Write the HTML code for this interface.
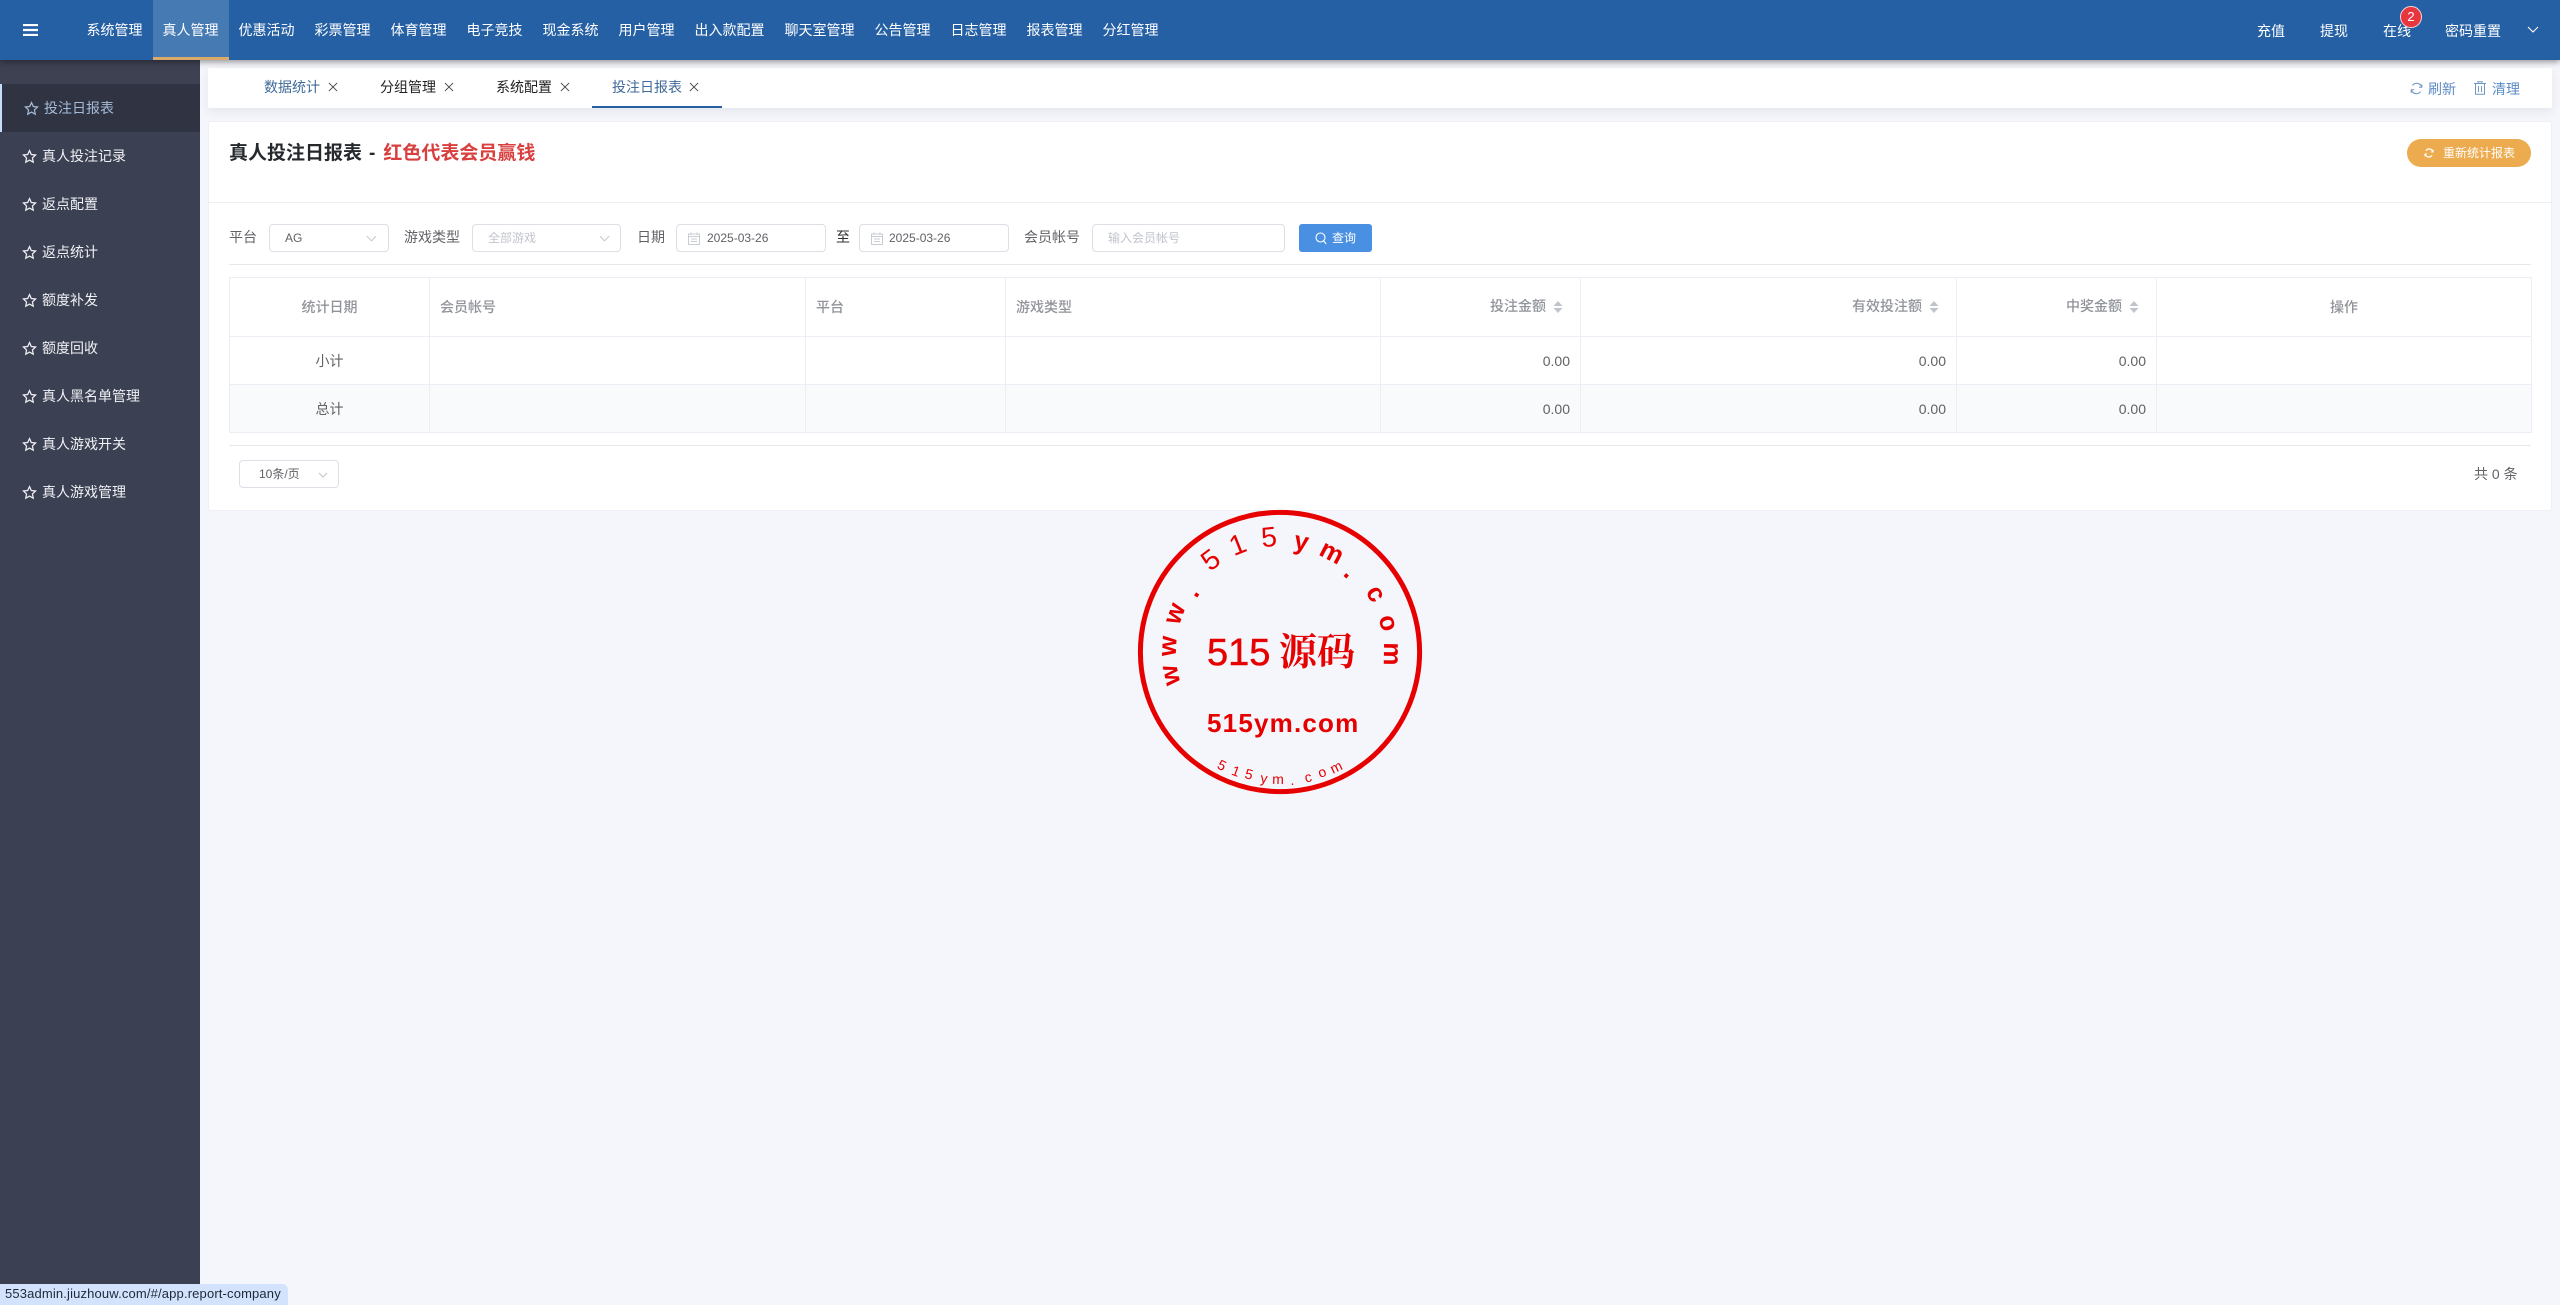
<!DOCTYPE html>
<html lang="zh"><head><meta charset="utf-8"><title>真人投注日报表</title>
<style>
*{box-sizing:border-box}
html,body{margin:0;padding:0;width:2560px;height:1305px;overflow:hidden;background:#f5f6fb;font-family:"Liberation Sans","Noto Sans CJK SC",sans-serif;font-size:14px;color:#606266}
.a{position:absolute}
.t{position:absolute;white-space:nowrap;line-height:20px}
#hd{left:0;top:0;width:2560px;height:60px;background:#2660a4;box-shadow:0 2px 6px rgba(0,0,0,.4);z-index:3}
#hd .n{position:absolute;top:0;height:60px;line-height:60px;text-align:center;color:#fff;font-size:14px;padding-right:1px}
#hd .n.on{background:#467ab3;border-bottom:3px solid #d9aa6a}
#sd{left:0;top:60px;width:200px;height:1245px;background:#3b4053}
#sd .m{position:absolute;left:0;width:200px;height:48px;line-height:48px;padding-left:42px;color:#f0f1f4;font-size:14px}
#sd .m svg{position:absolute;left:22px;top:17px}
#sd .m.on{background:#2f3342;border-left:2px solid #c7dcf7;color:#a5bcd8;padding-left:42px}
#sd .m.on svg{left:22px}
#tabs{left:208px;top:68px;width:2344px;height:40px;background:#fff;box-shadow:0 4px 10px rgba(40,50,80,.08)}
.tab{position:absolute;top:68px;height:40px;line-height:39px;font-size:14px;color:#222}
.x{position:absolute;top:14px;width:10px;height:10px}
#card{left:208px;top:121px;width:2344px;height:390px;background:#fff;border:1px solid #edeff4;border-radius:3px}
.in{position:absolute;top:224px;height:28px;background:#fff;border:1px solid #dcdfe6;border-radius:4px;font-size:12px;line-height:27px;color:#606266}
.hr{position:absolute;height:1px;background:#e6e8ec}
table{position:absolute;left:229px;top:277px;width:2302px;height:156px;border-collapse:collapse;table-layout:fixed}
td,th{border:1px solid #ebeef5;padding:0 10px;font-size:14px;color:#606266;font-weight:normal}
th{color:#909399;font-weight:500;height:59px;text-align:left}
tr.r td{height:48px}
.c{text-align:center}.rt{text-align:right}
th.rt{padding-right:34px;position:relative;padding-bottom:2px}
.car{position:absolute;right:17px;top:23px;width:10px;height:12px}
</style></head><body>

<div id="hd" class="a">
<svg class="a" style="left:23px;top:24px" width="15" height="12" viewBox="0 0 15 12"><path d="M0 1h15M0 6h15M0 11h15" stroke="#fff" stroke-width="2.2"/></svg>
<div class="n" style="left:77px;width:76px">系统管理</div>
<div class="n on" style="left:153px;width:76px">真人管理</div>
<div class="n" style="left:229px;width:76px">优惠活动</div>
<div class="n" style="left:305px;width:76px">彩票管理</div>
<div class="n" style="left:381px;width:76px">体育管理</div>
<div class="n" style="left:457px;width:76px">电子竞技</div>
<div class="n" style="left:533px;width:76px">现金系统</div>
<div class="n" style="left:609px;width:76px">用户管理</div>
<div class="n" style="left:685px;width:90px">出入款配置</div>
<div class="n" style="left:775px;width:90px">聊天室管理</div>
<div class="n" style="left:865px;width:76px">公告管理</div>
<div class="n" style="left:941px;width:76px">日志管理</div>
<div class="n" style="left:1017px;width:76px">报表管理</div>
<div class="n" style="left:1093px;width:76px">分红管理</div>
<div class="t" style="left:2257px;top:21px;color:#fff">充值</div>
<div class="t" style="left:2320px;top:21px;color:#fff">提现</div>
<div class="t" style="left:2383px;top:21px;color:#fff">在线</div>
<div class="a" style="left:2400px;top:6px;width:22px;height:22px;border-radius:50%;background:#e8363f;border:1px solid #f5d5d8;color:#fff;font-size:13px;line-height:20px;text-align:center">2</div>
<div class="t" style="left:2445px;top:21px;color:#fff">密码重置</div>
<svg class="a" style="left:2527px;top:26px" width="12" height="8" viewBox="0 0 12 8"><path d="M1 1l5 5 5-5" fill="none" stroke="#fff" stroke-width="1.1"/></svg>
</div>

<div id="sd" class="a">
<div class="a" style="left:0;top:0;width:200px;height:24px;background:#3d4152"></div>
<div class="m on" style="top:24px"><svg width="15" height="15" viewBox="0 0 24 24"><path d="M12 2.5l2.9 6.3 6.8.8-5 4.7 1.3 6.8-6-3.4-6 3.4 1.3-6.8-5-4.7 6.8-.8z" fill="none" stroke="#a5bcd8" stroke-width="2"/></svg>投注日报表</div>
<div class="m" style="top:72px"><svg width="15" height="15" viewBox="0 0 24 24"><path d="M12 2.5l2.9 6.3 6.8.8-5 4.7 1.3 6.8-6-3.4-6 3.4 1.3-6.8-5-4.7 6.8-.8z" fill="none" stroke="#f0f1f4" stroke-width="2"/></svg>真人投注记录</div>
<div class="m" style="top:120px"><svg width="15" height="15" viewBox="0 0 24 24"><path d="M12 2.5l2.9 6.3 6.8.8-5 4.7 1.3 6.8-6-3.4-6 3.4 1.3-6.8-5-4.7 6.8-.8z" fill="none" stroke="#f0f1f4" stroke-width="2"/></svg>返点配置</div>
<div class="m" style="top:168px"><svg width="15" height="15" viewBox="0 0 24 24"><path d="M12 2.5l2.9 6.3 6.8.8-5 4.7 1.3 6.8-6-3.4-6 3.4 1.3-6.8-5-4.7 6.8-.8z" fill="none" stroke="#f0f1f4" stroke-width="2"/></svg>返点统计</div>
<div class="m" style="top:216px"><svg width="15" height="15" viewBox="0 0 24 24"><path d="M12 2.5l2.9 6.3 6.8.8-5 4.7 1.3 6.8-6-3.4-6 3.4 1.3-6.8-5-4.7 6.8-.8z" fill="none" stroke="#f0f1f4" stroke-width="2"/></svg>额度补发</div>
<div class="m" style="top:264px"><svg width="15" height="15" viewBox="0 0 24 24"><path d="M12 2.5l2.9 6.3 6.8.8-5 4.7 1.3 6.8-6-3.4-6 3.4 1.3-6.8-5-4.7 6.8-.8z" fill="none" stroke="#f0f1f4" stroke-width="2"/></svg>额度回收</div>
<div class="m" style="top:312px"><svg width="15" height="15" viewBox="0 0 24 24"><path d="M12 2.5l2.9 6.3 6.8.8-5 4.7 1.3 6.8-6-3.4-6 3.4 1.3-6.8-5-4.7 6.8-.8z" fill="none" stroke="#f0f1f4" stroke-width="2"/></svg>真人黑名单管理</div>
<div class="m" style="top:360px"><svg width="15" height="15" viewBox="0 0 24 24"><path d="M12 2.5l2.9 6.3 6.8.8-5 4.7 1.3 6.8-6-3.4-6 3.4 1.3-6.8-5-4.7 6.8-.8z" fill="none" stroke="#f0f1f4" stroke-width="2"/></svg>真人游戏开关</div>
<div class="m" style="top:408px"><svg width="15" height="15" viewBox="0 0 24 24"><path d="M12 2.5l2.9 6.3 6.8.8-5 4.7 1.3 6.8-6-3.4-6 3.4 1.3-6.8-5-4.7 6.8-.8z" fill="none" stroke="#f0f1f4" stroke-width="2"/></svg>真人游戏管理</div>
</div>

<div id="tabs" class="a"></div>
<div class="tab" style="left:264px;color:#3f6a9a">数据统计<svg class="x" style="left:64px" viewBox="0 0 11 11"><path d="M1 1l9 9M10 1l-9 9" stroke="#444" stroke-width="1"/></svg></div>
<div class="tab" style="left:380px">分组管理<svg class="x" style="left:64px" viewBox="0 0 11 11"><path d="M1 1l9 9M10 1l-9 9" stroke="#444" stroke-width="1"/></svg></div>
<div class="tab" style="left:496px">系统配置<svg class="x" style="left:64px" viewBox="0 0 11 11"><path d="M1 1l9 9M10 1l-9 9" stroke="#444" stroke-width="1"/></svg></div>
<div class="tab" style="left:612px;color:#3f6a9a">投注日报表<svg class="x" style="left:77px" viewBox="0 0 11 11"><path d="M1 1l9 9M10 1l-9 9" stroke="#444" stroke-width="1"/></svg></div>
<div class="a" style="left:592px;top:106px;width:130px;height:2px;background:#26609f"></div>
<svg class="a" style="left:2410px;top:82px" width="13" height="13" viewBox="0 0 13 13"><path d="M11.5 5A5 5 0 0 0 2.5 3.5M1.5 8a5 5 0 0 0 9 1.5" fill="none" stroke="#6f98c6" stroke-width="1.1"/><path d="M11.8 2.3V5.2H9M1.2 10.7V7.8H4" fill="none" stroke="#6f98c6" stroke-width="1"/></svg>
<div class="t" style="left:2428px;top:79px;color:#5b8bc4">刷新</div>
<svg class="a" style="left:2474px;top:81px" width="12" height="14" viewBox="0 0 12 14"><path d="M0 2.5h12M4 2.5V.7h4v1.8M1.5 2.5v10.8h9V2.5M4.5 5v6M7.5 5v6" fill="none" stroke="#6f98c6" stroke-width="1"/></svg>
<div class="t" style="left:2492px;top:79px;color:#5b8bc4">清理</div>

<div id="card" class="a"></div>
<div class="t" style="left:229px;top:141px;font-size:19px;font-weight:bold;color:#25292e;line-height:26px">真人投注日报表<span style="margin:0 6px 0 7px">-</span><span style="color:#d8403f;margin-left:2px">红色代表会员赢钱</span></div>
<div class="a" style="left:2407px;top:139px;width:124px;height:28px;border-radius:14px;background:#ecab4f"></div>
<svg class="a" style="left:2424px;top:148px" width="10" height="10" viewBox="0 0 13 13"><path d="M11.5 5A5 5 0 0 0 2.5 3.5M1.5 8a5 5 0 0 0 9 1.5" fill="none" stroke="#fff" stroke-width="1.6"/><path d="M11.8 2.3V5.2H9M1.2 10.7V7.8H4" fill="none" stroke="#fff" stroke-width="1.4"/></svg>
<div class="t" style="left:2443px;top:143px;font-size:12px;color:#fff">重新统计报表</div>
<div class="hr" style="left:209px;top:202px;width:2342px;background:#edeff4"></div>

<div class="t" style="left:229px;top:227px;color:#606266">平台</div>
<div class="in" style="left:269px;width:120px;padding-left:15px">AG<svg class="a" style="right:11px;top:10px" width="11" height="7" viewBox="0 0 12 7"><path d="M1 1l5 5 5-5" fill="none" stroke="#c0c4cc"/></svg></div>
<div class="t" style="left:404px;top:227px;color:#606266">游戏类型</div>
<div class="in" style="left:472px;width:149px;padding-left:15px;color:#c0c4cc">全部游戏<svg class="a" style="right:10px;top:10px" width="11" height="7" viewBox="0 0 12 7"><path d="M1 1l5 5 5-5" fill="none" stroke="#c0c4cc"/></svg></div>
<div class="t" style="left:637px;top:227px;color:#606266">日期</div>
<div class="in" style="left:676px;width:150px;padding-left:30px"><svg class="a" style="left:11px;top:7px" width="12" height="13" viewBox="0 0 12 13"><path d="M.5 2h11v10.5H.5zM3 .5V3M9 .5V3M.5 4.5h11M3 7h6M3 9.5h6" fill="none" stroke="#c8ccd3"/></svg>2025-03-26</div>
<div class="t" style="left:836px;top:227px;color:#303133">至</div>
<div class="in" style="left:859px;width:150px;padding-left:29px"><svg class="a" style="left:11px;top:7px" width="12" height="13" viewBox="0 0 12 13"><path d="M.5 2h11v10.5H.5zM3 .5V3M9 .5V3M.5 4.5h11M3 7h6M3 9.5h6" fill="none" stroke="#c8ccd3"/></svg>2025-03-26</div>
<div class="t" style="left:1024px;top:227px;color:#606266">会员帐号</div>
<div class="in" style="left:1092px;width:193px;padding-left:15px;color:#c0c4cc">输入会员帐号</div>
<div class="a" style="left:1299px;top:224px;width:73px;height:28px;background:#4a90e2;border-radius:3px"></div>
<svg class="a" style="left:1315px;top:232px" width="12" height="13" viewBox="0 0 12 13"><circle cx="5.5" cy="5.5" r="4.5" fill="none" stroke="#fff" stroke-width="1.1"/><path d="M8.8 9l2.4 3" stroke="#fff" stroke-width="1.1"/></svg>
<div class="t" style="left:1332px;top:228px;font-size:12px;color:#fff">查询</div>
<div class="hr" style="left:229px;top:264px;width:2302px"></div>

<table><colgroup><col style="width:200px"><col style="width:376px"><col style="width:200px"><col style="width:375px"><col style="width:200px"><col style="width:376px"><col style="width:200px"><col style="width:375px"></colgroup>
<tr><th class="c">统计日期</th><th>会员帐号</th><th>平台</th><th>游戏类型</th>
<th class="rt">投注金额<svg class="car" viewBox="0 0 10 12"><path d="M5 0l4.5 5h-9zM5 12L.5 7h9z" fill="#c0c4cc"/></svg></th>
<th class="rt">有效投注额<svg class="car" viewBox="0 0 10 12"><path d="M5 0l4.5 5h-9zM5 12L.5 7h9z" fill="#c0c4cc"/></svg></th>
<th class="rt">中奖金额<svg class="car" viewBox="0 0 10 12"><path d="M5 0l4.5 5h-9zM5 12L.5 7h9z" fill="#c0c4cc"/></svg></th>
<th class="c">操作</th></tr>
<tr class="r"><td class="c">小计</td><td></td><td></td><td></td><td class="rt">0.00</td><td class="rt">0.00</td><td class="rt">0.00</td><td></td></tr>
<tr class="r" style="background:#f9fafb"><td class="c">总计</td><td></td><td></td><td></td><td class="rt">0.00</td><td class="rt">0.00</td><td class="rt">0.00</td><td></td></tr>
</table>
<div class="hr" style="left:229px;top:445px;width:2302px"></div>
<div class="in" style="left:239px;top:460px;width:100px;height:28px;padding-left:19px;color:#606266">10条/页<svg class="a" style="right:10px;top:11px" width="10" height="6" viewBox="0 0 10 6"><path d="M1 1l4 4 4-4" fill="none" stroke="#c0c4cc"/></svg></div>
<div class="t" style="left:2474px;top:464px;color:#606266">共 0 条</div>

<svg class="a" style="left:1130px;top:500px" width="300" height="300" viewBox="1130 500 300 300" font-family="'Liberation Sans',sans-serif" fill="#e60000">
<circle cx="1280" cy="652" r="139.6" fill="none" stroke="#e60000" stroke-width="5"/>
<g font-size="26" font-weight="bold" text-anchor="middle">
<text transform="translate(1280 652) rotate(-102) translate(0 -113)" y="9">w</text>
<text transform="translate(1280 652) rotate(-87) translate(0 -113)" y="9">w</text>
<text transform="translate(1280 652) rotate(-70) translate(0 -113)" y="9">w</text>
<text transform="translate(1280 652) rotate(-55.6) translate(0 -108)" y="9">.</text>
<text transform="translate(1280 652) rotate(-37) translate(0 -116)" y="10" font-weight="normal" font-size="28">5</text>
<text transform="translate(1280 652) rotate(-21.5) translate(0 -116)" y="10" font-weight="normal" font-size="28">1</text>
<text transform="translate(1280 652) rotate(-5.5) translate(0 -116)" y="10" font-weight="normal" font-size="28">5</text>
<text transform="translate(1280 652) rotate(11) translate(0 -113)" y="9">y</text>
<text transform="translate(1280 652) rotate(27.5) translate(0 -113)" y="9">m</text>
<text transform="translate(1280 652) rotate(41) translate(0 -108)" y="9">.</text>
<text transform="translate(1280 652) rotate(58.7) translate(0 -113)" y="9">c</text>
<text transform="translate(1280 652) rotate(75) translate(0 -113)" y="9">o</text>
<text transform="translate(1280 652) rotate(91) translate(0 -113)" y="9">m</text>
</g>
<text x="1207" y="665" font-size="38" stroke="#e60000" stroke-width=".5">515</text>
<text x="1279" y="665" font-size="38" font-family="'Noto Serif CJK SC',serif" font-weight="bold">源码</text>
<text x="1207" y="732" font-size="26" font-weight="bold" letter-spacing="1.2">515ym.com</text>
<g font-size="14" text-anchor="middle">
<text transform="translate(1222 765) rotate(27)" y="5">5</text>
<text transform="translate(1236 771) rotate(20)" y="5">1</text>
<text transform="translate(1249 774) rotate(15)" y="5">5</text>
<text transform="translate(1264 778) rotate(8)" y="5">y</text>
<text transform="translate(1278 779) rotate(1)" y="5">m</text>
<text transform="translate(1292 780) rotate(-6)" y="5">.</text>
<text transform="translate(1308 777) rotate(-13)" y="5">c</text>
<text transform="translate(1322 772) rotate(-20)" y="5">o</text>
<text transform="translate(1336 767) rotate(-26)" y="5">m</text>
</g>
</svg>

<div class="a" style="left:0;top:1284px;width:288px;height:21px;background:#d3e3fd;border-top-right-radius:6px;color:#1f2937;font-size:13px;line-height:20px;padding-left:5px;white-space:nowrap;letter-spacing:.15px">553admin.jiuzhouw.com/#/app.report-company</div>
</body></html>
